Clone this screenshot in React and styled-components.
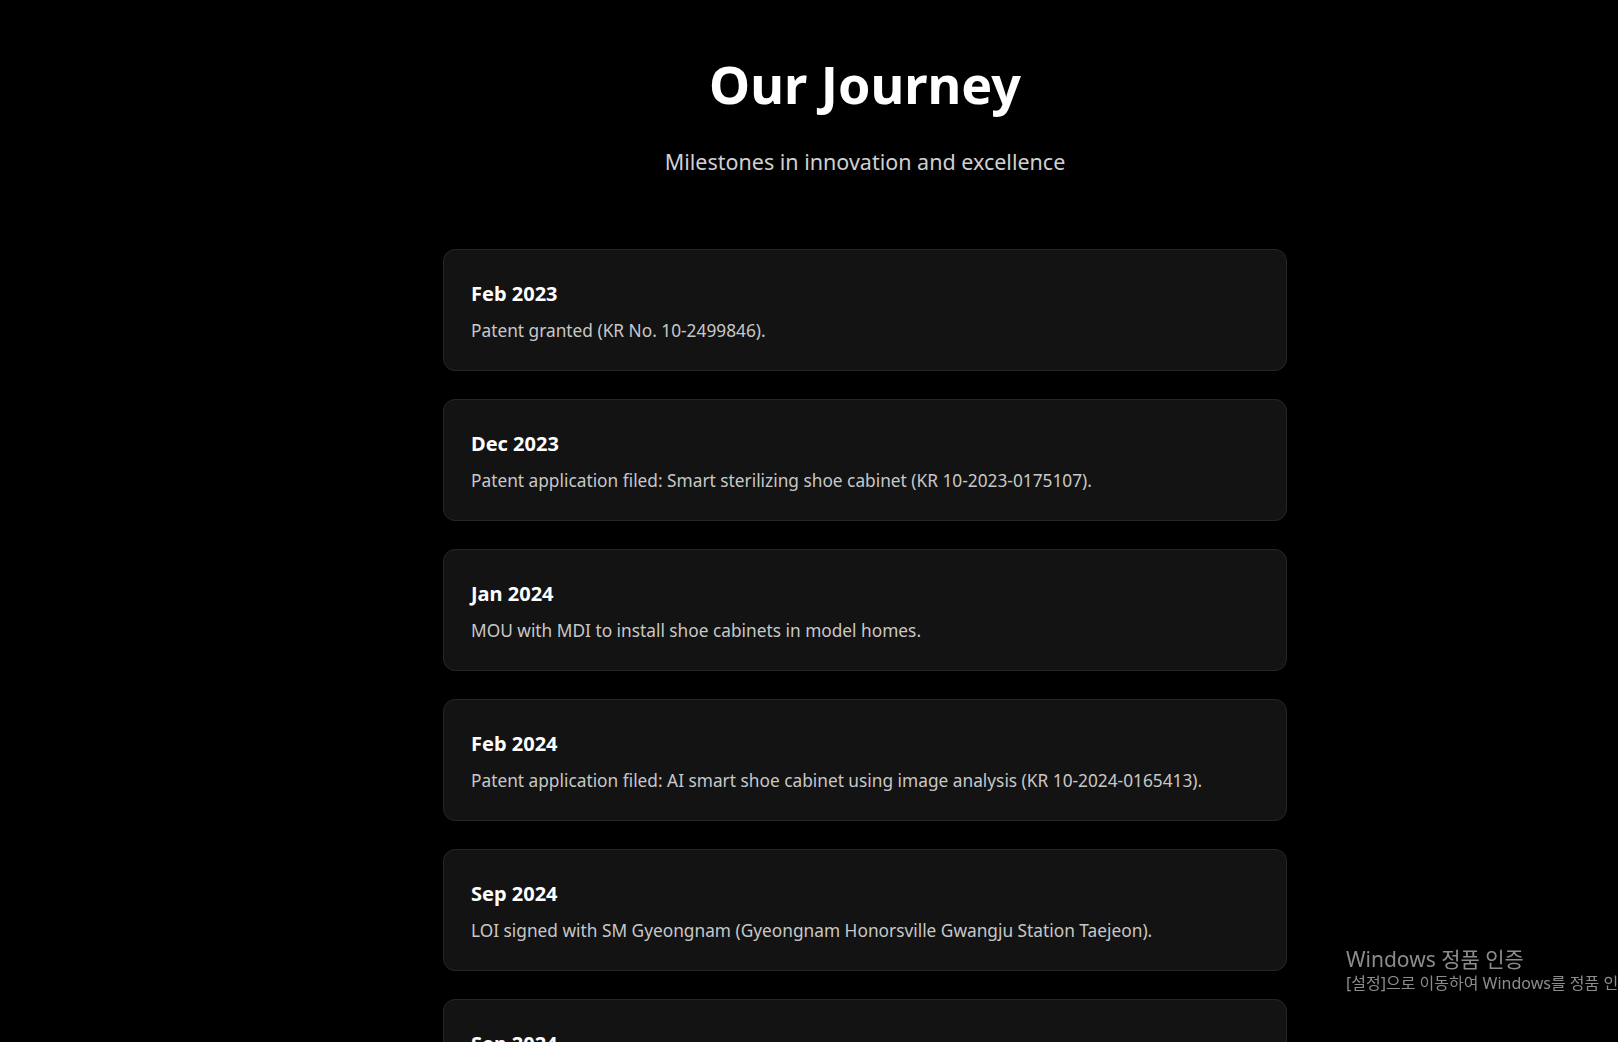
import React from "react";
import styled, { createGlobalStyle } from "styled-components";

const GlobalStyle = createGlobalStyle`
  html, body {
    margin: 0;
    padding: 0;
    background: #000;
    overflow: hidden;
  }
  body {
    font-family: "Noto Sans", "Noto Sans CJK KR", sans-serif;
    color: #fff;
  }
`;

const Page = styled.main`
  min-height: 100vh;
  padding: 52px 0 80px 112px;
  display: flex;
  flex-direction: column;
  align-items: center;
`;

const Title = styled.h1`
  margin: 0;
  font-size: 52px;
  font-weight: 700;
  line-height: 64px;
  color: #fff;
`;

const Subtitle = styled.p`
  margin: 31px 0 0;
  font-size: 21.5px;
  line-height: 30px;
  color: #d0d0d0;
`;

const Timeline = styled.ol`
  list-style: none;
  margin: 72px 0 0;
  padding: 0;
  width: 844px;
  display: flex;
  flex-direction: column;
  gap: 28px;
`;

const Card = styled.li`
  box-sizing: border-box;
  height: 122px;
  padding: 31px 27px 20px;
  background: #131313;
  border: 1px solid #262626;
  border-radius: 12px;
`;

const DateLabel = styled.h3`
  margin: 0;
  font-size: 20px;
  font-weight: 700;
  line-height: 26px;
  color: #fff;
`;

const Description = styled.p`
  margin: 11px 0 0;
  font-size: 17.3px;
  line-height: 26px;
  color: #c8c8c8;
`;

const Watermark = styled.div`
  position: fixed;
  left: 1346px;
  top: 946px;
  color: #8c8c8c;
  white-space: nowrap;
  pointer-events: none;
`;

const WatermarkTitle = styled.div`
  font-size: 21px;
  line-height: 27px;
`;

const WatermarkText = styled.div`
  font-size: 16px;
  line-height: 21px;
`;

const milestones = [
  { date: "Feb 2023", text: "Patent granted (KR No. 10-2499846)." },
  { date: "Dec 2023", text: "Patent application filed: Smart sterilizing shoe cabinet (KR 10-2023-0175107)." },
  { date: "Jan 2024", text: "MOU with MDI to install shoe cabinets in model homes." },
  { date: "Feb 2024", text: "Patent application filed: AI smart shoe cabinet using image analysis (KR 10-2024-0165413)." },
  { date: "Sep 2024", text: "LOI signed with SM Gyeongnam (Gyeongnam Honorsville Gwangju Station Taejeon)." },
  { date: "Sep 2024", text: "Pilot installation agreement signed." },
];

export default function App() {
  return (
    <>
      <GlobalStyle />
      <Page>
        <Title>Our Journey</Title>
        <Subtitle>Milestones in innovation and excellence</Subtitle>
        <Timeline>
          {milestones.map((m, i) => (
            <Card key={i}>
              <DateLabel>{m.date}</DateLabel>
              <Description>{m.text}</Description>
            </Card>
          ))}
        </Timeline>
      </Page>
      <Watermark>
        <WatermarkTitle>Windows 정품 인증</WatermarkTitle>
        <WatermarkText>[설정]으로 이동하여 Windows를 정품 인</WatermarkText>
      </Watermark>
    </>
  );
}
